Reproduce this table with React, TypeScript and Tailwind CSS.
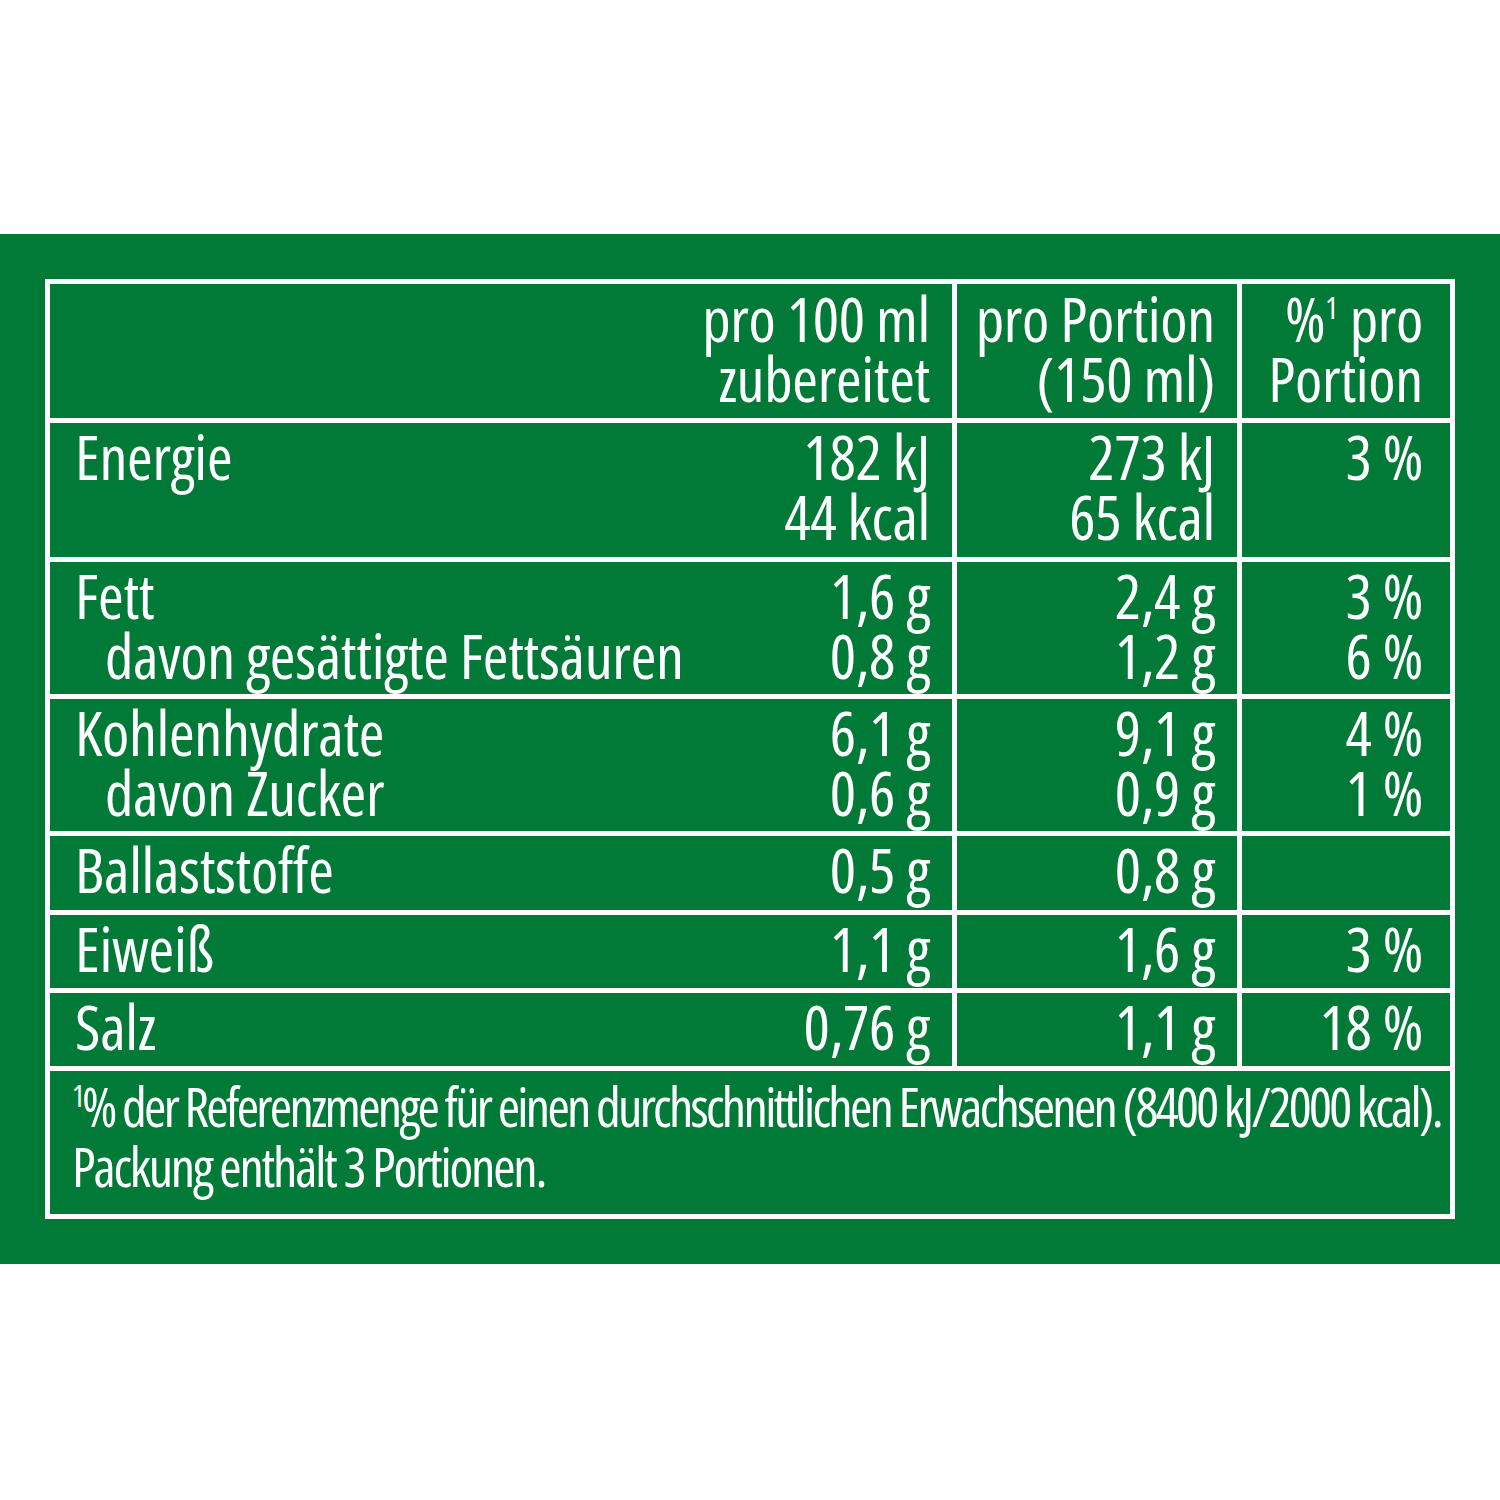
import React from "react";

type Row = {
  label: string[];
  per100: string[];
  portion: string[];
  percent: string[];
  height: string;
};

const rows: Row[] = [
  {
    label: ["Energie"],
    per100: ["182 kJ", "44 kcal"],
    portion: ["273 kJ", "65 kcal"],
    percent: ["3 %"],
    height: "h-[139px]",
  },
  {
    label: ["Fett", "davon gesättigte Fettsäuren"],
    per100: ["1,6 g", "0,8 g"],
    portion: ["2,4 g", "1,2 g"],
    percent: ["3 %", "6 %"],
    height: "h-[137px]",
  },
  {
    label: ["Kohlenhydrate", "davon Zucker"],
    per100: ["6,1 g", "0,6 g"],
    portion: ["9,1 g", "0,9 g"],
    percent: ["4 %", "1 %"],
    height: "h-[137px]",
  },
  {
    label: ["Ballaststoffe"],
    per100: ["0,5 g"],
    portion: ["0,8 g"],
    percent: [],
    height: "h-[79px]",
  },
  {
    label: ["Eiweiß"],
    per100: ["1,1 g"],
    portion: ["1,6 g"],
    percent: ["3 %"],
    height: "h-[78px]",
  },
  {
    label: ["Salz"],
    per100: ["0,76 g"],
    portion: ["1,1 g"],
    percent: ["18 %"],
    height: "h-[78px]",
  },
];

function Lines({ lines }: { lines: string[] }) {
  return (
    <>
      {lines.map((l) => (
        <div key={l} className="whitespace-nowrap">
          {l}
        </div>
      ))}
    </>
  );
}

function Sup() {
  return (
    <span className="inline-block align-top text-[30px] leading-[30px] relative top-[5px]">1</span>
  );
}

export default function App() {
  return (
    <div className="bg-white min-h-[1500px] pt-[234px] font-['Open_Sans',sans-serif] font-stretch-condensed text-white">
      <div className="bg-[#017a38] h-[1030px] px-[45px] pt-[45px]">
        <div className="border-[5px] border-white text-[62px] leading-[60px] tracking-[-0.3px]">
          {/* header */}
          <div className="grid grid-cols-[907px_285px_1fr] h-[139px] border-b-[5px] border-white">
            <div className="border-r-[5px] border-white pt-[4px] pr-[22px] text-right">
              <div>pro 100 ml</div>
              <div>zubereitet</div>
            </div>
            <div className="border-r-[5px] border-white pt-[4px] pr-[22px] text-right">
              <div>pro Portion</div>
              <div>(150 ml)</div>
            </div>
            <div className="pt-[4px] pr-[27px] text-right">
              <div className="whitespace-nowrap">
                %<Sup />
                <span className="ml-[12px]">pro</span>
              </div>
              <div>Portion</div>
            </div>
          </div>

          {rows.map((r) => (
            <div
              key={r.label[0]}
              className={`grid grid-cols-[907px_285px_1fr] border-b-[5px] border-white ${r.height}`}
            >
              <div className="border-r-[5px] border-white pt-[3px] pl-[25px] pr-[22px] flex justify-between">
                <div>
                  {r.label.map((l, i) => (
                    <div key={l} className={i > 0 ? "pl-[30px] whitespace-nowrap" : "whitespace-nowrap"}>
                      {l}
                    </div>
                  ))}
                </div>
                <div className="text-right">
                  <Lines lines={r.per100} />
                </div>
              </div>
              <div className="border-r-[5px] border-white pt-[3px] pr-[22px] text-right">
                <Lines lines={r.portion} />
              </div>
              <div className="pt-[3px] pr-[27px] text-right">
                <Lines lines={r.percent} />
              </div>
            </div>
          ))}

          {/* footnote */}
          <div className="h-[143px] pt-[5px] pl-[22px] pr-[6px] text-[54px]">
            <div className="whitespace-nowrap tracking-[-2.7px]">
              <Sup />% der Referenzmenge für einen durchschnittlichen Erwachsenen (8400 kJ/2000 kcal).
            </div>
            <div className="whitespace-nowrap tracking-[-2.2px]">Packung enthält 3 Portionen.</div>
          </div>
        </div>
      </div>
    </div>
  );
}
